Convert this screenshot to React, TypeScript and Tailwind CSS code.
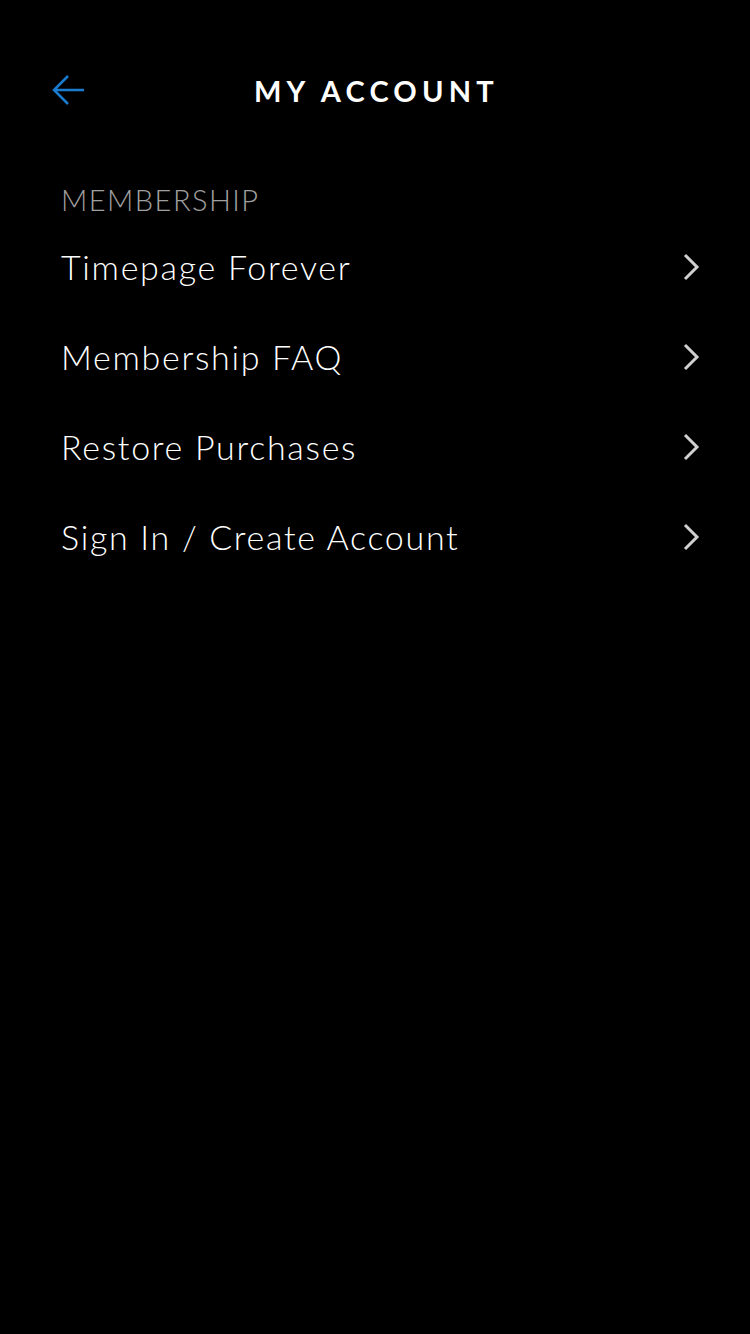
import React from "react";

const items = ["Timepage Forever", "Membership FAQ", "Restore Purchases", "Sign In / Create Account"];

function Chevron() {
  return (
    <svg width="20" height="30" viewBox="0 0 20 30" fill="none">
      <path d="M3 3 L15 15 L3 27" stroke="#d0d0d0" strokeWidth="3" strokeLinecap="butt" strokeLinejoin="miter" />
    </svg>
  );
}

export default function App() {
  return (
    <div className="w-[750px] h-[1334px] bg-black text-white" style={{ fontFamily: "Lato, 'Open Sans', sans-serif" }}>
      <div className="relative h-[180px] flex items-start">
        <div className="absolute left-[52px] top-[74px]">
          <svg width="34" height="32" viewBox="0 0 34 32" fill="none">
            <path d="M32 16 H3 M16 2 L2 16 L16 30" stroke="#1b7ccf" strokeWidth="2.5" />
          </svg>
        </div>
        <div className="w-full pt-[71px] text-center">
          <span className="text-[29px] font-bold tracking-[0.18em] pl-[0.1em] leading-[40px]">MY ACCOUNT</span>
        </div>
      </div>
      <div className="pl-[61px] pr-[48px]">
        <div className="text-[29px] font-light tracking-[0.05em] text-[#a0a0a0] leading-[40px]">MEMBERSHIP</div>
        <div className="mt-[2px]">
          {items.map((t) => (
            <div key={t} className="h-[90px] flex items-center justify-between">
              <span className="text-[34px] leading-[40px] font-light tracking-[0.05em] text-white">{t}</span>
              <Chevron />
            </div>
          ))}
        </div>
      </div>
    </div>
  );
}
